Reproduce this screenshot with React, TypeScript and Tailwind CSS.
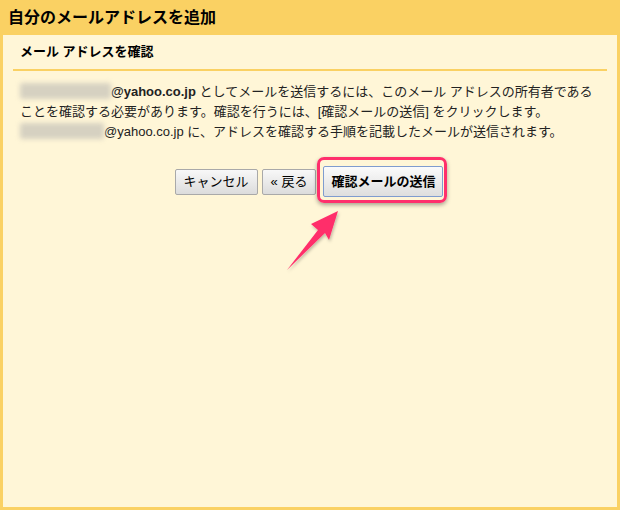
import React from "react";

const font = { fontFamily: '"Liberation Sans", "Noto Sans CJK JP", sans-serif' };

function Blur({ w }: { w: string }) {
  return (
    <span className={`inline-block ${w} h-[16px] align-[-3px] relative`}>
      <span className="absolute inset-0 bg-[#d6d1c1] blur-[2.5px] rounded-[2px]" />
    </span>
  );
}

export default function App() {
  return (
    <div
      className="w-[620px] h-[510px] bg-[#fad163] flex flex-col text-[#111] overflow-hidden"
      style={font}
    >
      <div className="h-[35px] pl-[8px] flex items-center text-[16px] font-bold text-black">
        自分のメールアドレスを追加
      </div>
      <div className="flex-1 bg-[#fff6d7] mx-[3px] mb-[3px] px-[10px] relative">
        <div className="h-[36px] flex items-center pl-[7px] text-[13px] font-bold border-b-2 border-[#fad163] text-black">
          メール アドレスを確認
        </div>
        <div className="px-[7px] mt-[11px] text-[13px] leading-[20px] text-[#222]">
          <Blur w="w-[91px]" />
          <span className="font-bold">@yahoo.co.jp</span> としてメールを送信するには、このメール アドレスの所有者である
          <br />
          ことを確認する必要があります。確認を行うには、[確認メールの送信] をクリックします。
          <br />
          <Blur w="w-[84px]" />
          @yahoo.co.jp に、アドレスを確認する手順を記載したメールが送信されます。
        </div>
        <div className="flex justify-center items-center mt-[24px] pr-[2px]">
          <button className="h-[26px] px-[8px] border border-[#a9a9a9] rounded-[2px] bg-gradient-to-b from-[#f8f8f8] to-[#dcdcdc] text-[13px] text-black">
            キャンセル
          </button>
          <button className="ml-[4px] h-[26px] px-[8px] border border-[#a9a9a9] rounded-[2px] bg-gradient-to-b from-[#f8f8f8] to-[#dcdcdc] text-[13px] text-black">
            « 戻る
          </button>
          <div className="relative ml-[7px]">
            <span className="absolute left-[-6px] right-[-4px] top-[-9px] bottom-[-6px] border-[3px] border-[#ff2f6c] rounded-[7px] shadow-[0_2px_4px_rgba(0,0,0,0.35)]" />
            <button className="relative h-[31px] px-[7px] border border-[#7f9ccf] rounded-[2px] bg-gradient-to-b from-[#fbfbfb] to-[#dedede] text-[13px] font-bold text-black">
              確認メールの送信
            </button>
          </div>
        </div>
        <svg
          className="absolute left-0 top-0 pointer-events-none"
          width="614"
          height="472"
          viewBox="3 35 614 472"
        >
          <defs>
            <filter id="sh" x="-20%" y="-20%" width="140%" height="140%">
              <feDropShadow dx="1" dy="2" stdDeviation="1.5" floodColor="#000" floodOpacity="0.25" />
            </filter>
          </defs>
          <polygon
            points="338,211 311,224 318,230 287,270 325,233 329,240"
            fill="#ff2d6b"
            filter="url(#sh)"
          />
        </svg>
      </div>
    </div>
  );
}
